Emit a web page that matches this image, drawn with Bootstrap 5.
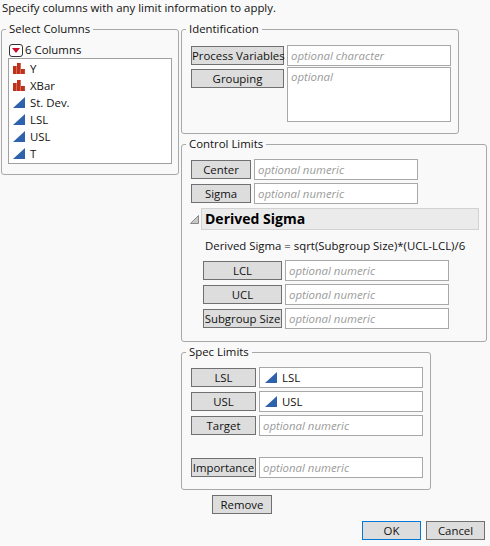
<!DOCTYPE html>
<html lang="en">
<head>
<meta charset="utf-8">
<link href="https://cdn.jsdelivr.net/npm/bootstrap@5.3.0/dist/css/bootstrap.min.css" rel="stylesheet">
<style>
html,body{margin:0;height:546px;overflow:hidden}
body{background:#f9f9f9;color:#111;font:11.4px/16px "Open Sans","Noto Sans",sans-serif;width:490px}
.lead-line{padding:0 0 0 2px;height:16px;line-height:16px;white-space:nowrap}
.panes{margin:13px 0 0 1px;gap:2px}
.grp{border:1px solid #a8a8a8;border-radius:3px;margin:0;padding:0;min-width:0;position:relative}
.grp>legend{float:none;width:auto;font-size:11.4px;line-height:16px;margin:0 0 0 4px;padding:0 3px;position:absolute;top:-9px;left:0;background:#f9f9f9}
.sel{width:178px;height:146px}
.colhead{padding:12px 0 0 7px;height:28px;align-items:center;gap:2px}
.redbtn{width:14px;height:13px;border:1px solid #333;border-radius:3px;background:#fff;display:flex;align-items:center;justify-content:center}
.redbtn i{border:4px solid transparent;border-top:5px solid #c8102e;border-bottom:0;display:block}
.collist{margin:0 0 0 6px;width:164px;height:106px;border:1px solid #a0a0a0;background:#fff;border-radius:0;padding:1px 0 0 4px}
.collist li{height:17px;display:flex;align-items:center;gap:5px;border:0;padding:0;background:none;color:#111;line-height:17px;font-size:11.4px}
.id{width:278px;height:105px;padding:15px 0 0 9px}
.ctl{width:306px;height:198px;padding:14px 0 0 9px}
.spc{width:250px;height:138px;padding:14px 0 0 9px}
.gapb{margin-top:10px}
.frow{gap:3px;height:21px;align-items:center}
.frow+.frow{margin-top:3px}
.tbtn{--bs-btn-padding-x:0;--bs-btn-padding-y:0;--bs-btn-font-size:11.4px;--bs-btn-line-height:16px;--bs-btn-border-radius:0;--bs-btn-bg:#dddddd;--bs-btn-border-color:#707070;--bs-btn-color:#111;--bs-btn-hover-bg:#dddddd;--bs-btn-hover-color:#111;--bs-btn-hover-border-color:#707070;height:19px;flex:none;white-space:nowrap;font-family:inherit}
.w93{width:93px}.w61{width:60px}.w80{width:79px}.w66{width:65px}
.fld{width:164px;height:21px;flex:none;border:1px solid #a8a8a8;border-radius:0;background:#fff;padding:0 3px;font-size:11.4px;line-height:16px;color:#111;font-family:inherit;min-height:0}
.fld::placeholder{color:#9a9a9a;font-style:italic;opacity:1}
.fldbox{width:164px;height:55px;resize:none;padding-top:1px}
.idrow2{margin-top:1px;align-items:flex-start;gap:3px}
.idrow2 .tbtn{margin-top:2px}
.drv{height:22px;margin:4px 7px 0 -1px;gap:2px;align-items:center}
.drvtitle{flex:1;height:22px;background:#ebebeb;border:1px solid #d2d2d2;font-weight:700;font-size:14px;line-height:19px;padding-left:3px;color:#000}
.formula{margin:8px 0 6px 14px;height:16px;white-space:nowrap}
.sub{margin-left:12px}
.fldicon{display:flex;align-items:center;gap:5px;padding:0 0 0 5px}
.spacer{height:21px}
.rm{margin:5px 0 0 212px}
.actions{margin:7px 5px 0 0;justify-content:flex-end;gap:5px}
.actions .tbtn{width:59px}
.okb{--bs-btn-border-color:#0078d7;--bs-btn-hover-border-color:#0078d7}
.rm .tbtn{width:60px}
</style>
</head>
<body>
<div class="lead-line">Specify columns with any limit information to apply.</div>
<div class="d-flex panes">
  <div>
    <fieldset class="grp sel">
      <legend>Select Columns</legend>
      <div class="d-flex colhead"><span class="redbtn"><i></i></span><span>6 Columns</span></div>
      <ul class="list-group collist">
        <li class="list-group-item"><svg width="12" height="11" viewBox="0 0 12 11"><path fill="#c0311c" d="M0 3h3.7v8H0zM4 0h3.7v11H4zM8 6h3.9v5H8z"/></svg>Y</li>
        <li class="list-group-item"><svg width="12" height="11" viewBox="0 0 12 11"><path fill="#c0311c" d="M0 3h3.7v8H0zM4 0h3.7v11H4zM8 6h3.9v5H8z"/></svg>XBar</li>
        <li class="list-group-item"><svg width="12" height="11" viewBox="0 0 12 11"><path fill="#2f62ad" d="M0 11 12 0v11z"/></svg>St. Dev.</li>
        <li class="list-group-item"><svg width="12" height="11" viewBox="0 0 12 11"><path fill="#2f62ad" d="M0 11 12 0v11z"/></svg>LSL</li>
        <li class="list-group-item"><svg width="12" height="11" viewBox="0 0 12 11"><path fill="#2f62ad" d="M0 11 12 0v11z"/></svg>USL</li>
        <li class="list-group-item"><svg width="12" height="11" viewBox="0 0 12 11"><path fill="#2f62ad" d="M0 11 12 0v11z"/></svg>T</li>
      </ul>
    </fieldset>
  </div>
  <div>
    <fieldset class="grp id">
      <legend>Identification</legend>
      <div class="d-flex frow"><button class="btn tbtn w93">Process Variables</button><input class="form-control fld" placeholder="optional character"></div>
      <div class="d-flex idrow2"><button class="btn tbtn w93">Grouping</button><textarea class="form-control fld fldbox" placeholder="optional"></textarea></div>
    </fieldset>
    <fieldset class="grp ctl gapb">
      <legend>Control Limits</legend>
      <div class="d-flex frow"><button class="btn tbtn w61">Center</button><input class="form-control fld" placeholder="optional numeric"></div>
      <div class="d-flex frow"><button class="btn tbtn w61">Sigma</button><input class="form-control fld" placeholder="optional numeric"></div>
      <div class="d-flex drv"><svg width="9" height="9" viewBox="0 0 9 9"><path fill="#c8c8c8" stroke="#888" d="M.5 8.5 8.5.5v8z"/></svg><div class="drvtitle">Derived Sigma</div></div>
      <div class="formula">Derived Sigma = sqrt(Subgroup Size)*(UCL-LCL)/6</div>
      <div class="sub">
        <div class="d-flex frow"><button class="btn tbtn w80">LCL</button><input class="form-control fld" placeholder="optional numeric"></div>
        <div class="d-flex frow"><button class="btn tbtn w80">UCL</button><input class="form-control fld" placeholder="optional numeric"></div>
        <div class="d-flex frow"><button class="btn tbtn w80">Subgroup Size</button><input class="form-control fld" placeholder="optional numeric"></div>
      </div>
    </fieldset>
    <fieldset class="grp spc gapb">
      <legend>Spec Limits</legend>
      <div class="d-flex frow"><button class="btn tbtn w66">LSL</button><div class="fld fldicon"><svg width="12" height="11" viewBox="0 0 12 11"><path fill="#2f62ad" d="M0 11 12 0v11z"/></svg>LSL</div></div>
      <div class="d-flex frow"><button class="btn tbtn w66">USL</button><div class="fld fldicon"><svg width="12" height="11" viewBox="0 0 12 11"><path fill="#2f62ad" d="M0 11 12 0v11z"/></svg>USL</div></div>
      <div class="d-flex frow"><button class="btn tbtn w66">Target</button><input class="form-control fld" placeholder="optional numeric"></div>
      <div class="spacer"></div>
      <div class="d-flex frow"><button class="btn tbtn w66">Importance</button><input class="form-control fld" placeholder="optional numeric"></div>
    </fieldset>
  </div>
</div>
<div class="rm"><button class="btn tbtn">Remove</button></div>
<div class="d-flex actions"><button class="btn tbtn okb">OK</button><button class="btn tbtn">Cancel</button></div>
</body>
</html>
